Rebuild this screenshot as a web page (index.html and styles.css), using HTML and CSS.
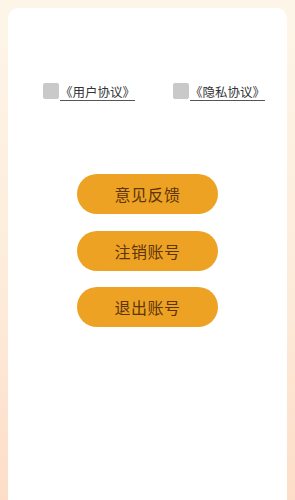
FILE: index.html
```html
<!DOCTYPE html>
<html lang="zh">
<head>
  <meta charset="UTF-8">
  <title>设置</title>
  <link rel="stylesheet" href="styles.css">
</head>
<body>

<div class="card">
  <div class="agreements">
    <label class="agree">
      <span class="box"></span>
      <a class="link" href="#">《用户协议》</a>
    </label>
    <label class="agree">
      <span class="box"></span>
      <a class="link" href="#">《隐私协议》</a>
    </label>
  </div>

  <div class="actions">
    <button class="btn">意见反馈</button>
    <button class="btn">注销账号</button>
    <button class="btn">退出账号</button>
  </div>
</div>

</body>
</html>
```

FILE: styles.css
```css
html, body {
  height: 100%;
}

body {
  margin: 0;
  padding: 8px 8px 0 8px;
  box-sizing: border-box;
  font-family: "Noto Sans CJK SC", "Noto Sans", sans-serif;
  background: linear-gradient(to bottom, #fdf6e8 0%, #fdebd9 60%, #fdddc8 100%);
}

.card {
  background: #fff;
  border-radius: 10px 10px 0 0;
  height: 100%;
  box-sizing: border-box;
  padding-top: 73px;
}

.agreements {
  display: flex;
  justify-content: space-between;
  padding: 0 22px 0 35px;
}

.agree {
  display: flex;
  align-items: center;
}

.box {
  width: 16px;
  height: 16px;
  background: #c9c9c9;
  border-radius: 2px;
  margin-right: 1px;
}

.link {
  color: #333;
  font-size: 12.5px;
  line-height: 16px;
  text-decoration: none;
  border-bottom: 1px solid #555;
  padding-top: 3px;
}

.actions {
  display: flex;
  flex-direction: column;
  align-items: center;
  gap: 16.5px;
  margin-top: 73px;
}

.btn {
  width: 141px;
  height: 40px;
  border: none;
  border-radius: 20px;
  background: #eda224;
  color: #5e3508;
  font-family: inherit;
  font-size: 16px;
  letter-spacing: 0.5px;
  cursor: pointer;
}
```
